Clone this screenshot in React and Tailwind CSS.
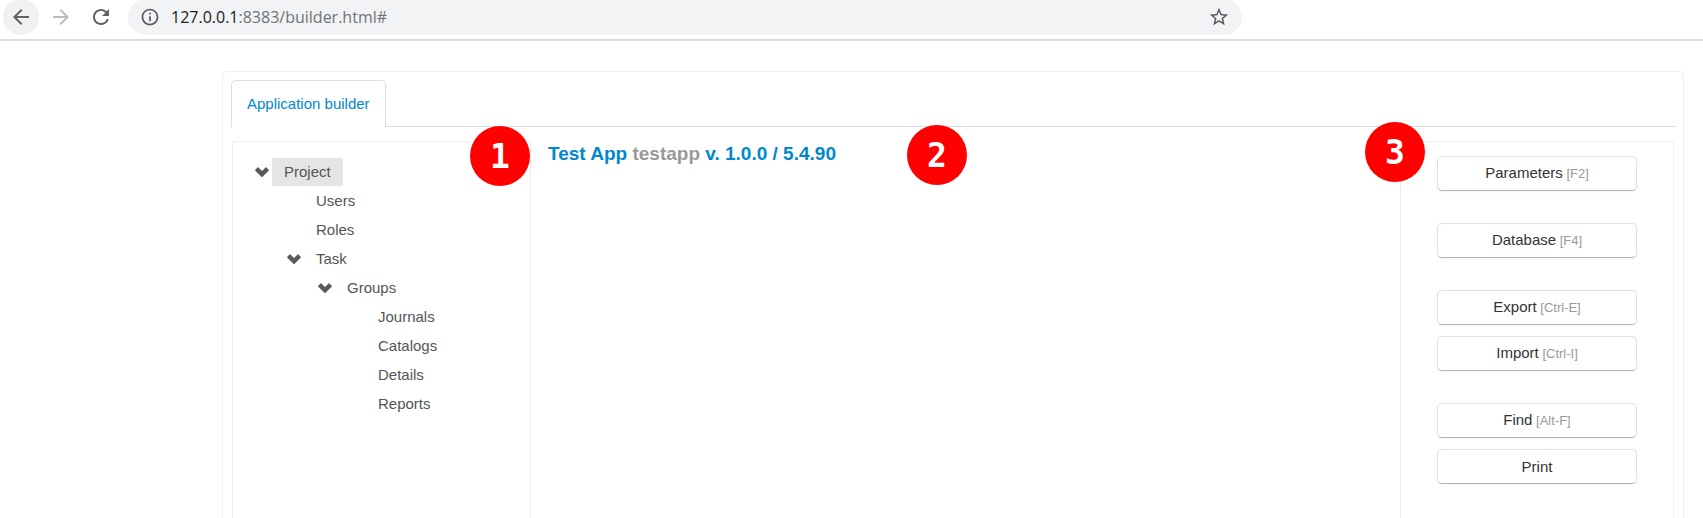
import { MdArrowBack, MdArrowForward, MdRefresh, MdInfoOutline, MdStarBorder } from "react-icons/md";

const treeRows = [
  { label: "Project", level: 0, open: true, selected: true },
  { label: "Users", level: 1 },
  { label: "Roles", level: 1 },
  { label: "Task", level: 1, open: true },
  { label: "Groups", level: 2, open: true },
  { label: "Journals", level: 3 },
  { label: "Catalogs", level: 3 },
  { label: "Details", level: 3 },
  { label: "Reports", level: 3 },
];

const indents = ["pl-[19px]", "pl-[51px]", "pl-[82px]", "pl-[113px]"];

const buttonGroups = [
  [{ label: "Parameters", keys: "[F2]" }],
  [{ label: "Database", keys: "[F4]" }],
  [
    { label: "Export", keys: "[Ctrl-E]" },
    { label: "Import", keys: "[Ctrl-I]" },
  ],
  [{ label: "Find", keys: "[Alt-F]" }, { label: "Print" }],
];

function Chevron() {
  return (
    <svg viewBox="0 0 14 10" className="h-[10px] w-[14px]" fill="#5a5a5a" aria-hidden="true">
      <path d="M0.3 2.8 L2.5 0.4 Q3 0 3.5 0.4 L7 4.1 L10.5 0.4 Q11 0 11.5 0.4 L13.7 2.8 Q14.1 3.3 13.7 3.8 L7.6 9.7 Q7 10.2 6.4 9.7 L0.3 3.8 Q-0.1 3.3 0.3 2.8Z" />
    </svg>
  );
}

function Badge({ children, className }) {
  return (
    <span
      className={`absolute flex size-[60px] items-center justify-center rounded-full bg-[#fe0000] font-['DejaVu_Sans_Mono',monospace] text-[33px] leading-none font-bold text-white ${className}`}
    >
      {children}
    </span>
  );
}

function BrowserBar() {
  return (
    <header className="flex h-[41px] items-start overflow-hidden border-b-2 border-[#dadce0] pl-[3px]">
      <div className="-mt-px flex h-9 flex-1 items-center">
        <button aria-label="Back" className="flex size-9 items-center justify-center rounded-full bg-[#f1f1f1] text-[#5f6368]">
          <MdArrowBack size={24} />
        </button>
        <button aria-label="Forward" className="ml-1 flex size-9 items-center justify-center text-[#babcbe]">
          <MdArrowForward size={24} />
        </button>
        <button aria-label="Reload" className="ml-1 flex size-9 items-center justify-center text-[#5f6368]">
          <MdRefresh size={24} />
        </button>
        <div className="mr-[461px] ml-[9px] flex h-9 flex-1 items-center rounded-full bg-[#f1f3f4] pr-3 pl-3 text-[#54585d]">
          <MdInfoOutline size={20} />
          <p className="ml-[11px] flex-1 font-['Open_Sans',sans-serif] text-[16px] leading-6 text-[#6f7377]">
            <span className="text-[#202124]">127.0.0.1</span>:8383/builder.html#
          </p>
          <button aria-label="Bookmark this page">
            <MdStarBorder size={22} />
          </button>
        </div>
      </div>
    </header>
  );
}

export default function App() {
  return (
    <div className="flex min-h-screen flex-col bg-white font-['Liberation_Sans',Arial,sans-serif] text-[15px] leading-5 text-[#333]">
      <BrowserBar />
      <main className="mt-[30px] mr-[19px] ml-[222px] flex flex-1 flex-col rounded-t-[5px] border border-b-0 border-[#eee] pt-2 pr-[7px] pl-2">
        <nav className="flex border-b border-[#ddd]">
          <a
            href="#"
            className="-mb-px rounded-t-[5px] border border-b-0 border-[#ddd] bg-white px-[15px] py-[13px] text-[#0088cc]"
          >
            Application builder
          </a>
        </nav>
        <div className="mt-[14px] mr-[2px] ml-px flex flex-1">
          <aside className="relative w-[299px] border border-b-0 border-[#eee] pt-4 pl-[3px]">
            <ul>
              {treeRows.map((row) => (
                <li key={row.label} className={`flex h-[29px] items-start ${indents[row.level]}`}>
                  <span className="flex h-7 w-[17px] items-center">{row.open && <Chevron />}</span>
                  <span className={`flex h-7 items-center px-3 text-[#555] ${row.selected ? "bg-[#e5e5e5]" : ""}`}>
                    {row.label}
                  </span>
                </li>
              ))}
            </ul>
            <Badge className="-top-4 right-0">1</Badge>
          </aside>
          <section className="relative flex-1 pl-[17px]">
            <h1 className="text-[19px] leading-[26px] font-bold text-[#0088cc]">
              Test App <span className="text-[#999]">testapp</span> v. 1.0.0 / 5.4.90
            </h1>
            <Badge className="-top-4 left-[376px]">2</Badge>
          </section>
          <aside className="relative flex w-[274px] flex-col gap-8 border border-b-0 border-[#eee] px-9 pt-[14px]">
            {buttonGroups.map((group) => (
              <div key={group[0].label} className="flex flex-col gap-[11px]">
                {group.map((b) => (
                  <button
                    key={b.label}
                    className="h-[35px] rounded-[5px] border border-[#e0e0e0] border-b-[#b3b3b3] bg-white shadow-[0_1px_2px_rgba(0,0,0,0.05)]"
                  >
                    {b.label}
                    {b.keys && <span className="text-[13px] text-[#999]"> {b.keys}</span>}
                  </button>
                ))}
              </div>
            ))}
            <Badge className="-top-5 -left-9">3</Badge>
          </aside>
        </div>
      </main>
    </div>
  );
}
